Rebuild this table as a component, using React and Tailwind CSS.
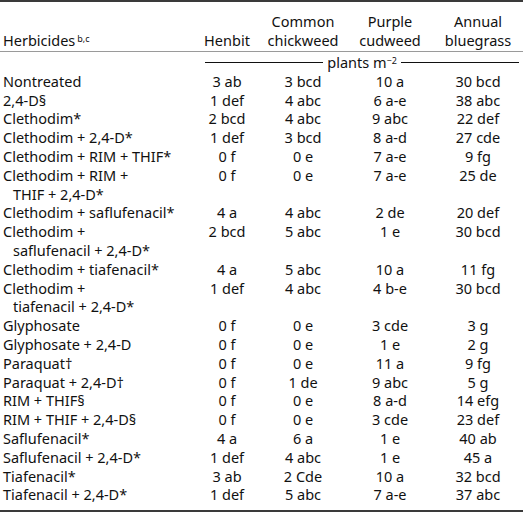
import React from 'react';

const rows = [
  { name: ['Nontreated'], v: ['3 ab', '3 bcd', '10 a', '30 bcd'] },
  { name: ['2,4-D§'], v: ['1 def', '4 abc', '6 a-e', '38 abc'] },
  { name: ['Clethodim*'], v: ['2 bcd', '4 abc', '9 abc', '22 def'] },
  { name: ['Clethodim + 2,4-D*'], v: ['1 def', '3 bcd', '8 a-d', '27 cde'] },
  { name: ['Clethodim + RIM + THIF*'], v: ['0 f', '0 e', '7 a-e', '9 fg'] },
  { name: ['Clethodim + RIM +', 'THIF + 2,4-D*'], v: ['0 f', '0 e', '7 a-e', '25 de'] },
  { name: ['Clethodim + saflufenacil*'], v: ['4 a', '4 abc', '2 de', '20 def'] },
  { name: ['Clethodim +', 'saflufenacil + 2,4-D*'], v: ['2 bcd', '5 abc', '1 e', '30 bcd'] },
  { name: ['Clethodim + tiafenacil*'], v: ['4 a', '5 abc', '10 a', '11 fg'] },
  { name: ['Clethodim +', 'tiafenacil + 2,4-D*'], v: ['1 def', '4 abc', '4 b-e', '30 bcd'] },
  { name: ['Glyphosate'], v: ['0 f', '0 e', '3 cde', '3 g'] },
  { name: ['Glyphosate + 2,4-D'], v: ['0 f', '0 e', '1 e', '2 g'] },
  { name: ['Paraquat†'], v: ['0 f', '0 e', '11 a', '9 fg'] },
  { name: ['Paraquat + 2,4-D†'], v: ['0 f', '1 de', '9 abc', '5 g'] },
  { name: ['RIM + THIF§'], v: ['0 f', '0 e', '8 a-d', '14 efg'] },
  { name: ['RIM + THIF + 2,4-D§'], v: ['0 f', '0 e', '3 cde', '23 def'] },
  { name: ['Saflufenacil*'], v: ['4 a', '6 a', '1 e', '40 ab'] },
  { name: ['Saflufenacil + 2,4-D*'], v: ['1 def', '4 abc', '1 e', '45 a'] },
  { name: ['Tiafenacil*'], v: ['3 ab', '2 Cde', '10 a', '32 bcd'] },
  { name: ['Tiafenacil + 2,4-D*'], v: ['1 def', '5 abc', '7 a-e', '37 abc'] },
];

const cols = 'grid grid-cols-[195px_64px_88px_86px_90px]';

function App() {
  return (
    <div className="w-[523px] h-[515px] bg-white text-[#111] text-[14.5px] leading-[18.8px] font-['Noto_Sans',sans-serif]">
      <div className="border-t-2 border-[#3a3a3a]">
        <div className={`${cols} items-end pt-[10px] pb-[1px] leading-[19px]`}>
          <div className="pl-[3px]">
            Herbicides<sup className="text-[9px] ml-[2px]">b,c</sup>
          </div>
          <div className="text-center">Henbit</div>
          <div className="text-center">Common<br />chickweed</div>
          <div className="text-center">Purple<br />cudweed</div>
          <div className="text-center">Annual<br />bluegrass</div>
        </div>
        <div className="border-t border-[#9a9a9a]" />
        <div className="flex items-center pl-[205px] pr-[4px] pt-[1px]">
          <div className="flex-1 border-t border-[#111]" />
          <span className="px-[4px]">plants m<sup className="text-[9px]">−2</sup></span>
          <div className="flex-1 border-t border-[#111]" />
        </div>
        <div className="pb-[6px]">
          {rows.map((r, i) => (
            <div key={i} className={cols}>
              <div className="pl-[3px]">
                {r.name.map((n, j) => (
                  <div key={j} className={j > 0 ? 'pl-[10px]' : ''}>{n}</div>
                ))}
              </div>
              {r.v.map((v, j) => (
                <div key={j} className="text-center">{v}</div>
              ))}
            </div>
          ))}
        </div>
        <div className="border-t-2 border-[#3a3a3a]" />
      </div>
    </div>
  );
}

export default App;
